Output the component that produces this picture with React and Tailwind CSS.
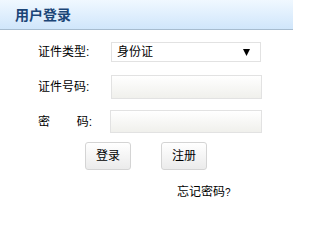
import { useState } from 'react'

const font = { fontFamily: '"Liberation Sans", "Noto Sans CJK SC", sans-serif' }

function Field({ label, children, className }) {
  return (
    <div className={`flex items-center ${className}`}>
      <div className="ml-[38px] w-[73px] shrink-0 text-[12px] text-black">{label}</div>
      {children}
    </div>
  )
}

export default function App() {
  const [idType, setIdType] = useState('身份证')
  const [idNo, setIdNo] = useState('')
  const [pwd, setPwd] = useState('')

  return (
    <div className="w-[293px] h-[215px] bg-white overflow-hidden" style={font}>
      {/* Header */}
      <div className="h-[30px] border-b border-[#a7bccf] bg-gradient-to-b from-[#f0f8ff] to-[#d0e6fb] flex items-center pl-[15px]">
        <h1 className="text-[14px] font-bold text-[#1b4577] leading-none">用户登录</h1>
      </div>

      {/* Form */}
      <Field className="mt-[12px] h-[20px]" label="证件类型:">
        <div className="relative w-[150px] h-[20px] border border-[#e2e2e2] bg-white flex items-center pl-[5px] text-[12px] text-black">
          <span>{idType}</span>
          <svg className="absolute right-[10px] top-[6px]" width="7" height="7" viewBox="0 0 7 7">
            <path d="M0 0H7L3.5 7Z" fill="#000" />
          </svg>
        </div>
      </Field>

      <Field className="mt-[13px] h-[24px]" label="证件号码:">
        <input
          value={idNo}
          onChange={(e) => setIdNo(e.target.value)}
          className="w-[151px] h-[24px] border border-[#e2e2e2] bg-gradient-to-b from-[#ffffff] to-[#f0f0ec] outline-none text-[12px] px-1"
        />
      </Field>

      <Field
        className="mt-[11px] h-[23px]"
        label={
          <div className="w-[54px] flex justify-between">
            <span>密</span>
            <span>码:</span>
          </div>
        }
      >
        <input
          type="password"
          value={pwd}
          onChange={(e) => setPwd(e.target.value)}
          className="-ml-[1px] w-[152px] h-[23px] border border-[#e2e2e2] bg-gradient-to-b from-[#ffffff] to-[#f0f0ec] outline-none text-[12px] px-1"
        />
      </Field>

      {/* Buttons */}
      <div className="mt-[9px] flex pl-[85px] gap-[30px]">
        <button className="w-[46px] h-[28px] rounded-[3px] border border-[#d4d4d4] bg-gradient-to-b from-[#ffffff] to-[#ebebeb] text-[12px] text-black">
          登录
        </button>
        <button className="w-[46px] h-[28px] rounded-[3px] border border-[#d4d4d4] bg-gradient-to-b from-[#ffffff] to-[#ebebeb] text-[12px] text-black">
          注册
        </button>
      </div>

      <div className="mt-[14px] pl-[177px] text-[12px] text-black leading-[16px]">
        忘记密码<span className="text-[10px]">?</span>
      </div>
    </div>
  )
}
